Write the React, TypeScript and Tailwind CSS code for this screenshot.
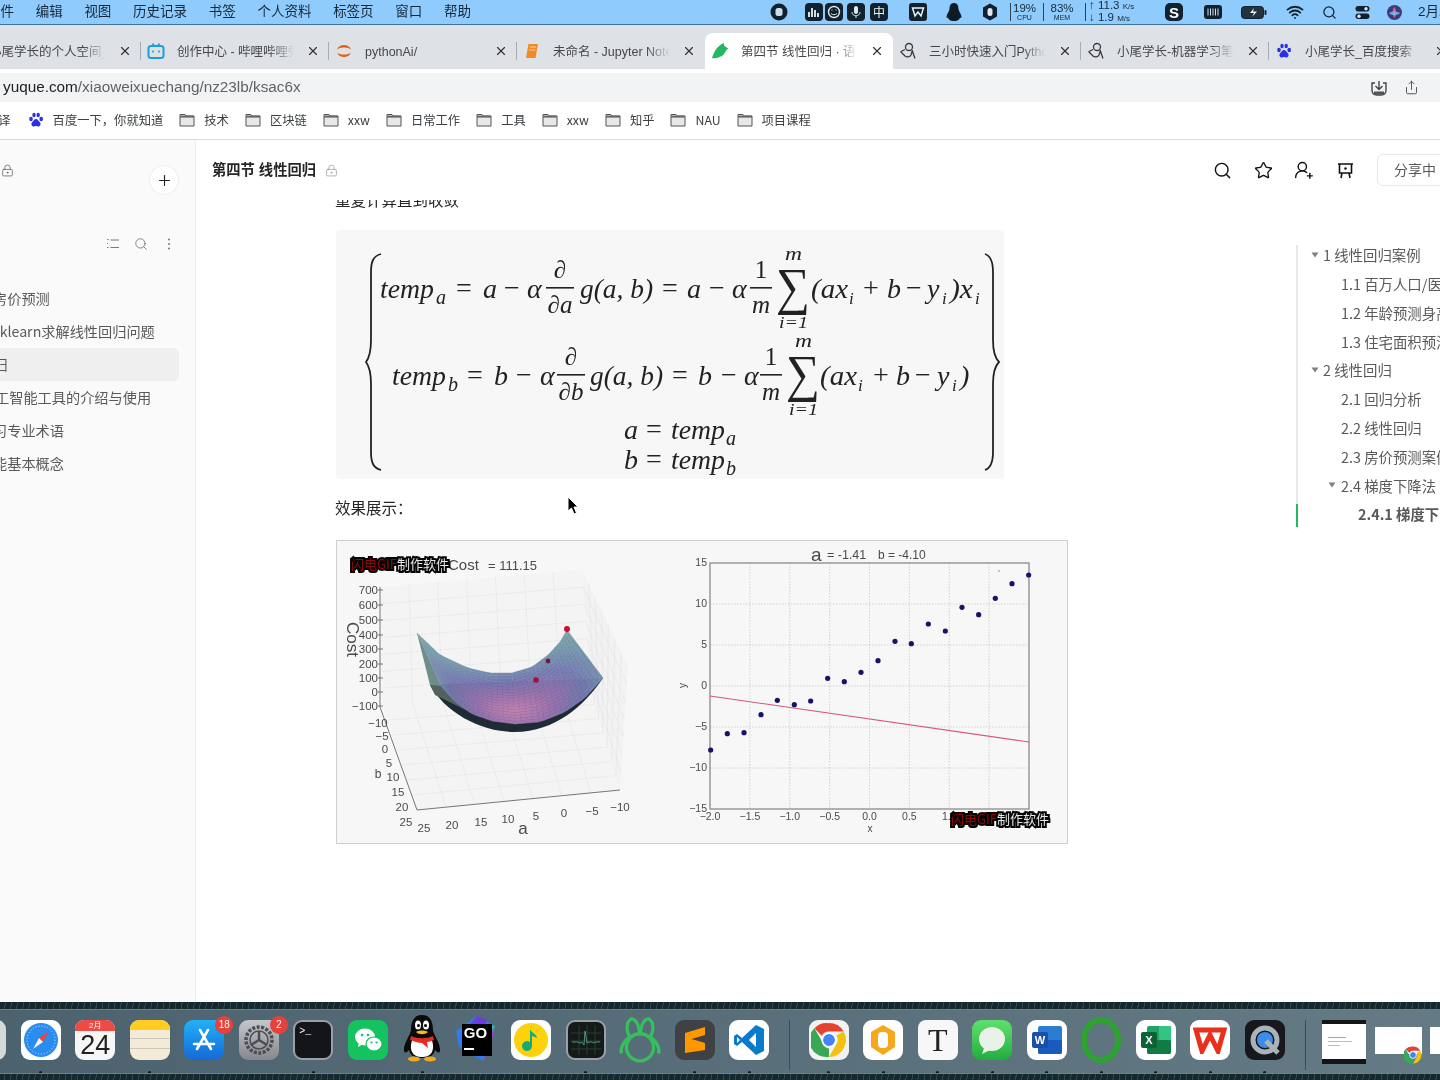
import React, { ReactNode } from "react";
import { Search, Star, UserRoundPlus, Plus, LockKeyhole, X, Share, Wifi } from "lucide-react";

const cjk = "[font-family:'Noto_Sans_CJK_SC',sans-serif]";

// ---------- small browser icons ----------
const FolderIcon = () => (
  <svg width="16" height="14" viewBox="0 0 16 14" className="flex-none">
    <path d="M1 3V1.5h5L7 3h8v10H1z" fill="#e8e8e8" stroke="#555" strokeWidth="1" />
    <rect x="1" y="2.6" width="14" height="2" fill="#666" />
  </svg>
);

const Paw = ({ size = 16 }: { size?: number }) => (
  <svg width={size} height={size} viewBox="0 0 16 16" className="flex-none">
    <g fill="#2932e1">
      <ellipse cx="3" cy="7" rx="1.8" ry="2.3" />
      <ellipse cx="6" cy="3" rx="1.7" ry="2.3" />
      <ellipse cx="10.2" cy="3" rx="1.7" ry="2.3" />
      <ellipse cx="13.2" cy="7" rx="1.8" ry="2.3" />
      <path d="M8 7c-2 0-2.400 2-4 3.500-1.300 1.500-.3 4.300 2 4 1-.1 1.300-.4 2-.4s1 .3 2 .4c2.300.3 3.300-2.500 2-4C10.400 9 10 7 8 7z" />
    </g>
  </svg>
);

const Bili = () => (
  <svg width="18" height="18" viewBox="0 0 18 18">
    <rect x="1.500" y="4" width="15" height="12" rx="2.500" fill="none" stroke="#1c9fd8" strokeWidth="2" />
    <path d="M5.500 1.500 7.500 4M12.500 1.500 10.500 4" stroke="#1c9fd8" strokeWidth="1.600" />
    <path d="M6 8.500v2M12 8.500v2" stroke="#1c9fd8" strokeWidth="1.600" />
  </svg>
);

const Jupyter = () => (
  <svg width="18" height="18" viewBox="0 0 18 18">
    <path d="M2 7.500C4 1.500 14 1.500 16 7.500 13 4.800 5 4.800 2 7.500z" fill="#e2641f" />
    <path d="M2 10.500C4 16.500 14 16.500 16 10.500 13 13.200 5 13.200 2 10.500z" fill="#e2641f" />
  </svg>
);

const Book = () => (
  <svg width="16" height="16" viewBox="0 0 16 16">
    <path d="M4.500 1H14l-2.500 14H2z" fill="#f08a24" />
    <path d="M5.800 4h6M5.300 7h6" stroke="#fbd9b0" strokeWidth="1" />
  </svg>
);

const Yuque = () => (
  <svg width="18" height="18" viewBox="0 0 18 18">
    <path d="M1 16C3 11 5 4 13 1c-.5 2 .3 3 2 4 1.200.7 2 1.200 2.500 1.500-2 1-2.500 2-3.500 4C12.500 14 6 17 1 16z" fill="#25b864" />
  </svg>
);

const Scribe = () => (
  <svg width="18" height="18" viewBox="0 0 18 18" fill="none" stroke="#3a3a3a" strokeWidth="1.300">
    <circle cx="10" cy="5" r="3.500" />
    <path d="M1.500 9.500 6 14c2 1.500 5 1 6-1l1.500-5M13 8l3 8.500M2 9.500l4-2" />
  </svg>
);

type TabProps = { icon?: ReactNode; title: string; active?: boolean; sep?: boolean };

const Tab = ({ icon, title, active, sep }: TabProps) => (
  <div
    className={
      active
        ? "relative flex h-[36px] w-[188px] flex-none items-center rounded-t-lg bg-white"
        : "relative flex h-[36px] w-[188px] flex-none items-center"
    }
  >
    <div className="flex w-[36px] flex-none justify-center pr-[6px]">{icon}</div>
    <div className="w-[117px] flex-none overflow-hidden whitespace-nowrap pt-[2px] text-[12.5px] text-[#45474a] [mask-image:linear-gradient(to_right,black_80%,transparent)]">
      {title}
    </div>
    <X size={14} strokeWidth={2} className="ml-[12px] flex-none text-[#333]" />
    {sep && <div className="absolute right-0 top-[9px] h-[18px] w-px bg-[#a9acb0]" />}
  </div>
);

// ---------- menu bar icons ----------
const Blob = ({ w, children, ml }: { w: string; children: ReactNode; ml?: string }) => (
  <div className={`flex flex-none items-center justify-center ${w} ${ml ?? ""}`}>{children}</div>
);

const MenuBar = () => (
  <div className="flex h-[25px] flex-none items-center overflow-hidden border-b border-[#3f7299] bg-[#8fcbfc] text-[13.5px] text-[#15293a]">
    <div className="-ml-[13px] flex flex-none gap-[21.7px] whitespace-nowrap pt-[1px]">
      {["文件", "编辑", "视图", "历史记录", "书签", "个人资料", "标签页", "窗口", "帮助"].map((m) => (
        <span key={m}>{m}</span>
      ))}
    </div>
    <Blob w="w-[28px]" ml="ml-[294px]">
      <svg width="18" height="18" viewBox="0 0 18 18">
        <circle cx="9" cy="9" r="8.500" fill="#12212e" />
        <rect x="5.500" y="5" width="7" height="8" rx="2.500" fill="#c9dff0" />
      </svg>
    </Blob>
    <Blob w="w-[20px]" ml="ml-[11px]">
      <svg width="18" height="18" viewBox="0 0 18 18">
        <rect width="18" height="18" rx="4" fill="#12212e" />
        <path d="M4 14V9M7 14V5M10 14V7M13 14V10" stroke="#e9f2f9" strokeWidth="1.800" />
      </svg>
    </Blob>
    <Blob w="w-[20px]">
      <svg width="18" height="18" viewBox="0 0 18 18">
        <rect width="18" height="18" rx="4" fill="#12212e" />
        <circle cx="9" cy="9" r="5.500" fill="none" stroke="#dde9f2" strokeWidth="1.400" />
        <path d="M6 10.500c1.500 1.500 4.500 1.500 6 0M6.500 7h1M10.500 7h1" stroke="#dde9f2" />
      </svg>
    </Blob>
    <Blob w="w-[24px]">
      <svg width="18" height="18" viewBox="0 0 18 18">
        <rect width="18" height="18" rx="4" fill="#12212e" />
        <rect x="7" y="3" width="4" height="8" rx="2" fill="#dde9f2" />
        <path d="M5 9c0 5 8 5 8 0M9 13v2" stroke="#dde9f2" fill="none" />
      </svg>
    </Blob>
    <Blob w="w-[22px]">
      <div className={`flex h-[18px] w-[18px] items-center justify-center rounded-[4px] bg-[#12212e] text-[12px] leading-none text-[#e9f2f9] ${cjk}`}>中</div>
    </Blob>
    <Blob w="w-[24px]" ml="ml-[16px]">
      <svg width="18" height="18" viewBox="0 0 18 18">
        <rect width="18" height="18" rx="3" fill="#12212e" />
        <path d="M3.500 5h11L12 13l-3-4-3 4z" fill="none" stroke="#e9f2f9" strokeWidth="1.500" />
      </svg>
    </Blob>
    <Blob w="w-[24px]" ml="ml-[12px]">
      <svg width="16" height="18" viewBox="0 0 16 18">
        <path d="M8 0c3.500 0 4.500 3 4.500 6 0 2 3 5 3 8 0 1.500-1 1-1.500.5-.5 2-2 3.500-6 3.500s-5.500-1.500-6-3.500C1.500 15 .5 15.500.5 14c0-3 3-6 3-8 0-3 1-6 4.500-6z" fill="#0e1a24" />
      </svg>
    </Blob>
    <Blob w="w-[24px]" ml="ml-[12px]">
      <svg width="16" height="18" viewBox="0 0 16 18">
        <path d="M8 0.500 15 4.500v9L8 17.500 1 13.500v-9z" fill="#12212e" />
        <rect x="5.500" y="5" width="5" height="8" rx="2.500" fill="#dde9f2" />
      </svg>
    </Blob>
    <div className="ml-[8px] h-[18px] w-px flex-none bg-[#2a4558]" />
    <div className="flex w-[27px] flex-none flex-col items-center text-[11.5px] leading-[11px]">
      <span>19%</span>
      <span className="text-[7px] leading-[8px]">CPU</span>
    </div>
    <div className="ml-[5px] h-[18px] w-px flex-none bg-[#2a4558]" />
    <div className="ml-[4px] flex w-[28px] flex-none flex-col items-center text-[11.5px] leading-[11px]">
      <span>83%</span>
      <span className="text-[7px] leading-[8px]">MEM</span>
    </div>
    <div className="ml-[9px] h-[18px] w-px flex-none bg-[#2a4558]" />
    <div className="ml-[3px] flex w-[50px] flex-none flex-col text-[11.5px] leading-[10px]">
      <span>↑ 11.3 <span className="text-[8px]">K/s</span></span>
      <span>↓ 1.9 <span className="text-[8px]">M/s</span></span>
    </div>
    <Blob w="w-[22px]" ml="ml-[24px]">
      <div className="flex h-[18px] w-[18px] items-center justify-center rounded-[5px] bg-[#12212e] text-[15px] font-bold leading-none text-white">S</div>
    </Blob>
    <Blob w="w-[24px]" ml="ml-[16px]">
      <svg width="18" height="14" viewBox="0 0 18 14">
        <rect width="18" height="14" rx="3" fill="#12212e" />
        <path d="M4 3.500v7M6.500 3.500v7M9 3.500v7M11.500 3.500v7M14 3.500v7" stroke="#cfe2f0" />
      </svg>
    </Blob>
    <Blob w="w-[28px]" ml="ml-[15px]">
      <svg width="26" height="13" viewBox="0 0 26 13">
        <rect x="0.500" y="0.500" width="22" height="12" rx="3" fill="#223240" stroke="#12212e" />
        <rect x="23.500" y="4" width="2" height="5" rx="1" fill="#12212e" />
        <path d="M13 2 9 7h4l-2 4 5-5.500h-4z" fill="#e9f2f9" />
      </svg>
    </Blob>
    <Blob w="w-[22px]" ml="ml-[16px]">
      <Wifi size={18} strokeWidth={2.4} className="text-[#12212e]" />
    </Blob>
    <Blob w="w-[20px]" ml="ml-[13px]">
      <Search size={15} strokeWidth={2} className="text-[#12212e]" />
    </Blob>
    <Blob w="w-[20px]" ml="ml-[13px]">
      <svg width="15" height="15" viewBox="0 0 15 15">
        <rect x="0.500" y="1" width="14" height="5.500" rx="2.750" fill="#12212e" />
        <rect x="0.500" y="8.500" width="14" height="5.500" rx="2.750" fill="#12212e" />
        <circle cx="11" cy="3.750" r="1.700" fill="#dde9f2" />
        <circle cx="4" cy="11.250" r="1.700" fill="#dde9f2" />
      </svg>
    </Blob>
    <Blob w="w-[20px]" ml="ml-[12px]">
      <svg width="15" height="15" viewBox="0 0 15 15">
        <circle cx="7.500" cy="7.500" r="7.500" fill="#3f3a78" />
        <path d="M7.500 2c2 3 2 8 0 11C5 10 5 5 7.500 2z" fill="#e65aa0" />
        <path d="M2 8c3-2 8-2 11 0-3 3-8 3-11 0z" fill="#71c4f0" opacity=".8" />
      </svg>
    </Blob>
    <span className="ml-[14px] flex-none whitespace-nowrap pt-[1px]">2月24日</span>
  </div>
);

const tabs: TabProps[] = [
  { title: "小尾学长的个人空间_哔哩", sep: true },
  { icon: <Bili />, title: "创作中心 - 哔哩哔哩弹幕", sep: true },
  { icon: <Jupyter />, title: "pythonAi/", sep: true },
  { icon: <Book />, title: "未命名 - Jupyter Notebook" },
  { icon: <Yuque />, title: "第四节 线性回归 · 语雀", active: true },
  { icon: <Scribe />, title: "三小时快速入门Python", sep: true },
  { icon: <Scribe />, title: "小尾学长-机器学习笔记", sep: true },
  { icon: <Paw />, title: "小尾学长_百度搜索" },
];

const BrowserChrome = () => (
  <>
    <div className="flex h-[44px] flex-none items-end overflow-hidden bg-[#dee1e6] pb-0">
      <div className="-ml-[47px] flex flex-none">
        {tabs.map((t) => (
          <Tab key={t.title} {...t} />
        ))}
      </div>
    </div>
    <div className="flex h-[33px] flex-none items-end bg-white">
      <div className="flex h-[29px] w-full items-center bg-[#f1f3f4] pl-[3px] pr-[21px] text-[15.3px]">
        <span className="text-[#202124]">yuque.com</span>
        <span className="text-[#5f6368]">/xiaoweixuechang/nz23lb/ksac6x</span>
        <svg width="18" height="18" viewBox="0 0 18 18" fill="none" stroke="#444" strokeWidth="1.400" className="ml-auto">
          <path d="M9 2v8M5.500 7 9 10.500 12.500 7" />
          <path d="M5 4H2v7c0 3 2 5 5 5h4c3 0 5-2 5-5V4h-3" />
          <rect x="4" y="12.500" width="10" height="3" fill="#555" stroke="none" />
        </svg>
        <Share size={15} strokeWidth={1.4} className="ml-[16px] text-[#444]" />
      </div>
    </div>
    <div className={`flex h-[37px] flex-none items-center gap-[16px] overflow-hidden bg-white pb-px text-[12.3px] text-[#3c4043] ${cjk}`}>
      <span className="-ml-[14px] flex-none">翻译</span>
      <div className="ml-px flex flex-none items-center gap-[9px]">
        <Paw />
        <span className="whitespace-nowrap">百度一下，你就知道</span>
      </div>
      {["技术", "区块链", "xxw", "日常工作", "工具", "xxw", "知乎", "NAU", "项目课程"].map((b, i) => (
        <div key={i} className="flex flex-none items-center gap-[9px]">
          <FolderIcon />
          <span>{b}</span>
        </div>
      ))}
    </div>
    <div className="h-px flex-none bg-[#dcdcdc]" />
  </>
);

// ---------- sidebar ----------
const sideItems = [
  { text: "房价预测", cls: "-ml-[7px]" },
  { text: "sklearn求解线性回归问题", cls: "-ml-[7px]" },
  { text: "线性回归", cls: "-ml-[49px]", active: true },
  { text: "工智能工具的介绍与使用", cls: "-ml-[5px]" },
  { text: "习专业术语", cls: "-ml-[7px]" },
  { text: "能基本概念", cls: "-ml-[7px]" },
];

const Sidebar = () => (
  <div className="w-[196px] flex-none overflow-hidden border-r border-[#f0f0f0] bg-[#fafafa]">
    <div className="flex items-start justify-between pr-[16px] pt-[25px]">
      <LockKeyhole size={13} strokeWidth={1.3} className="-mt-[1px] ml-[1px] text-[#555]" />
      <div className="flex h-[30px] w-[30px] items-center justify-center rounded-full border border-[#ececec] bg-white">
        <Plus size={17} strokeWidth={1.6} className="text-[#222]" />
      </div>
    </div>
    <div className="mt-[42px] flex justify-end gap-[14px] pr-[19px] text-[#777]">
      <svg width="14" height="14" viewBox="0 0 14 14" fill="none" stroke="currentColor" strokeWidth="1.200">
        <path d="M4.500 3H13M4.500 10.500H13M1 2.500h1.500M1 10.500h1.500M1 6.500h1" />
      </svg>
      <Search size={14} strokeWidth={1.5} />
      <svg width="14" height="14" viewBox="0 0 14 14" fill="currentColor">
        <circle cx="7" cy="2.500" r="1" />
        <circle cx="7" cy="7" r="1" />
        <circle cx="7" cy="11.500" r="1" />
      </svg>
    </div>
    <div className={`mt-[31px] text-[14.200px] text-[#585a5a] ${cjk}`}>
      {sideItems.map((s) => (
        <div
          key={s.text}
          className={
            s.active
              ? "flex h-[33px] w-[179px] items-center rounded-r-md bg-[#efefef] whitespace-nowrap"
              : "flex h-[33px] w-[179px] items-center whitespace-nowrap"
          }
        >
          <span className={`flex-none ${s.cls}`}>{s.text}</span>
        </div>
      ))}
    </div>
  </div>
);

// ---------- formula picture ----------
const M = ({ x, y, w, s = 28, up, children }: { x: number; y: number; w?: number; s?: number; up?: boolean; children: ReactNode }) => (
  <text x={x} y={y} fontSize={s} fontStyle={up ? "normal" : "italic"} textLength={w} lengthAdjust={w ? "spacingAndGlyphs" : undefined}>
    {children}
  </text>
);

const Sum = ({ cx, y, top }: { cx: number; y: number; top: number }) => (
  <>
    <M x={cx - 8} y={top} s={18} w={17}>m</M>
    <text x={cx - 17} y={y} fontSize="52" textLength={34} lengthAdjust="spacingAndGlyphs">∑</text>
    <M x={cx - 14} y={top + 68} s={16} w={29}>i=1</M>
  </>
);

const Frac = ({ cx, y, a, b, w }: { cx: number; y: number; a: string; b: string; w: number }) => (
  <>
    <text x={cx} y={y - 19} fontSize="25" textAnchor="middle">{a}</text>
    <rect x={cx - w / 2} y={y - 10} width={w} height="1.600" fill="#222" />
    <text x={cx} y={y + 16} fontSize="25" fontStyle="italic" textAnchor="middle">{b}</text>
  </>
);

const FormulaImage = () => (
  <svg
    viewBox="336 230 668 249"
    width="668"
    height="249"
    className="block rounded-sm bg-[#f7f7f7] blur-[0.4px] [font-family:'Liberation_Serif',serif]"
    fill="#222"
  >
    <M x={380} y={298} w={54}>temp</M>
    <M x={436} y={304} s={20}>a</M>
    <M x={456} y={297} up>=</M>
    <M x={483} y={298}>a</M>
    <M x={504} y={297} up>−</M>
    <M x={527} y={298}>α</M>
    <Frac cx={560} y={297} a="∂" b="∂a" w={28} />
    <M x={580} y={298} w={73}>g(a, b)</M>
    <M x={662} y={297} up>=</M>
    <M x={687} y={298}>a</M>
    <M x={709} y={297} up>−</M>
    <M x={732} y={298}>α</M>
    <Frac cx={761} y={297} a="1" b="m" w={22} />
    <Sum cx={793} y={304} top={260} />
    <M x={811} y={298} w={37}>(ax</M>
    <M x={849} y={304} s={17}>i</M>
    <M x={863} y={297} up>+</M>
    <M x={887} y={298}>b</M>
    <M x={906} y={297} up>−</M>
    <M x={927} y={298}>y</M>
    <M x={942} y={304} s={17}>i</M>
    <M x={950} y={298} w={23}>)x</M>
    <M x={975} y={304} s={17}>i</M>

    <M x={392} y={385} w={54}>temp</M>
    <M x={448} y={391} s={20}>b</M>
    <M x={467} y={384} up>=</M>
    <M x={494} y={385}>b</M>
    <M x={516} y={384} up>−</M>
    <M x={540} y={385}>α</M>
    <Frac cx={571} y={384} a="∂" b="∂b" w={28} />
    <M x={590} y={385} w={73}>g(a, b)</M>
    <M x={672} y={384} up>=</M>
    <M x={698} y={385}>b</M>
    <M x={721} y={384} up>−</M>
    <M x={744} y={385}>α</M>
    <Frac cx={771} y={384} a="1" b="m" w={22} />
    <Sum cx={803} y={391} top={347} />
    <M x={820} y={385} w={37}>(ax</M>
    <M x={858} y={391} s={17}>i</M>
    <M x={873} y={384} up>+</M>
    <M x={896} y={385}>b</M>
    <M x={915} y={384} up>−</M>
    <M x={937} y={385}>y</M>
    <M x={952} y={391} s={17}>i</M>
    <M x={960} y={385}>)</M>

    <M x={624} y={439}>a</M>
    <M x={646} y={438} up>=</M>
    <M x={671} y={439} w={54}>temp</M>
    <M x={726} y={445} s={20}>a</M>
    <M x={624} y={469}>b</M>
    <M x={646} y={468} up>=</M>
    <M x={671} y={469} w={54}>temp</M>
    <M x={726} y={475} s={20}>b</M>

    <path
      d="M381 254C373 256 371 262 371 272V340C371 352 369 358 366 362C369 366 371 372 371 384V452C371 462 373 468 381 470"
      fill="none"
      stroke="#222"
      strokeWidth="1.800"
    />
    <path
      d="M985 254C991 256 993 262 993 272V340C993 352 995 358 999 362C995 366 993 372 993 384V452C993 462 991 468 985 470"
      fill="none"
      stroke="#222"
      strokeWidth="1.800"
    />
  </svg>
);

// ---------- GIF charts ----------
type P = [number, number];
const sample = (pts: P[], t: number): P => {
  const f = t * (pts.length - 1);
  const i = Math.min(Math.floor(f), pts.length - 2);
  const k = f - i;
  return [pts[i][0] + (pts[i + 1][0] - pts[i][0]) * k, pts[i][1] + (pts[i + 1][1] - pts[i][1]) * k];
};

const topEdge: P[] = [[417, 633], [440, 655], [468, 668], [490, 673], [512, 673], [532, 667], [548, 655], [560, 642], [567, 630]];
const botEdge: P[] = [[441, 686], [455, 702], [472, 714], [492, 721], [515, 724], [540, 722], [565, 712], [585, 698], [603, 678]];

const stops: [number, number[]][] = [
  [0, [195, 130, 175]],
  [0.4, [150, 115, 175]],
  [0.7, [115, 120, 175]],
  [1.0, [115, 150, 170]],
  [1.3, [125, 165, 160]],
  [3, [125, 165, 160]],
];
const colorAt = (u: number, v: number) => {
  const d = Math.hypot((u - 0.5) / 0.55, (v - 0.75) / 0.85);
  for (let i = 0; i < stops.length - 1; i++) {
    if (d <= stops[i + 1][0]) {
      const k = (d - stops[i][0]) / (stops[i + 1][0] - stops[i][0]);
      const c = stops[i][1].map((a, j) => Math.round(a + (stops[i + 1][1][j] - a) * k));
      return `rgb(${c.join(",")})`;
    }
  }
  return "rgb(125,165,160)";
};

const Surface = () => {
  const quads: ReactNode[] = [];
  const nu = 34;
  const nv = 18;
  const pt = (u: number, v: number): P => {
    const a = sample(topEdge, u);
    const b = sample(botEdge, u);
    return [a[0] + (b[0] - a[0]) * v, a[1] + (b[1] - a[1]) * v];
  };
  for (let i = 0; i < nu; i++) {
    for (let j = 0; j < nv; j++) {
      const ps = [pt(i / nu, j / nv), pt((i + 1) / nu, j / nv), pt((i + 1) / nu, (j + 1) / nv), pt(i / nu, (j + 1) / nv)];
      const c = colorAt((i + 0.5) / nu, (j + 0.5) / nv);
      quads.push(<polygon key={`${i}-${j}`} points={ps.map((p) => p.join(",")).join(" ")} fill={c} stroke={c} strokeWidth="0.4" />);
    }
  }
  return <g>{quads}</g>;
};

const gridLines = (a: P, b: P, c: P, d: P, n: number, m: number) => {
  const lines: ReactNode[] = [];
  const mix = (p: P, q: P, t: number): P => [p[0] + (q[0] - p[0]) * t, p[1] + (q[1] - p[1]) * t];
  for (let i = 1; i < n; i++) {
    const s = mix(a, b, i / n);
    const e = mix(d, c, i / n);
    lines.push(<line key={`n${i}`} x1={s[0]} y1={s[1]} x2={e[0]} y2={e[1]} />);
  }
  for (let i = 1; i < m; i++) {
    const s = mix(a, d, i / m);
    const e = mix(b, c, i / m);
    lines.push(<line key={`m${i}`} x1={s[0]} y1={s[1]} x2={e[0]} y2={e[1]} />);
  }
  return <g stroke="#dedede" strokeWidth="0.7" strokeDasharray="1.500 1">{lines}</g>;
};

const Watermark = ({ x, y }: { x: number; y: number }) => (
  <text x={x} y={y} fontSize="13" style={{ paintOrder: "stroke" }} stroke="#050505" strokeWidth="4" className="[font-family:'Noto_Sans_CJK_SC',sans-serif]">
    <tspan fill="#8a0a0a">闪电GIF</tspan>
    <tspan fill="#e8e8e8">制作软件</tspan>
  </text>
);

const zTicks: [string, number][] = [["700", 590], ["600", 605], ["500", 620], ["400", 635], ["300", 649], ["200", 664], ["100", 678], ["0", 692], ["−100", 706]];
const bTicks: [string, number, number][] = [["−10", 378, 723], ["−5", 382, 736], ["0", 385, 749], ["5", 389, 763], ["10", 393, 777], ["15", 398, 792], ["20", 402, 807], ["25", 406, 822]];
const aTicks: [string, number, number][] = [["25", 424, 828], ["20", 452, 825], ["15", 481, 822], ["10", 508, 819], ["5", 536, 816], ["0", 564, 813], ["−5", 592, 811], ["−10", 620, 807]];

const zoomDots: P[] = [[122, 645], [172, 596], [222, 593], [273, 539], [322, 496], [373, 509], [422, 498], [473, 430], [523, 440], [573, 412], [624, 377], [675, 319], [724, 326], [775, 267], [826, 288], [876, 217], [926, 239], [976, 190], [1026, 146], [1076, 120]];
const xt = [-2, -1.5, -1, -0.5, 0, 0.5, 1, 1.5, 2];
const yt = [15, 10, 5, 0, -5, -10, -15];
const sx = (v: number) => 710 + ((v + 2) / 4) * 319;
const sy = (v: number) => 563 + ((15 - v) / 30) * 246;
const fmt = (v: number) => (v < 0 ? "−" : "") + Math.abs(v).toFixed(1);

const ChartImage = () => (
  <div className="h-[304px] w-[732px] border border-[#cfcfcf]">
    <svg
      viewBox="337 541 730 302"
      width="730"
      height="302"
      className="block bg-[#f7f7f7] blur-[0.4px] [font-family:'Liberation_Sans',sans-serif]"
    >
      {/* 3d box */}
      <polygon points="380,587 582,570 590,690 383,705" fill="#f4f4f4" />
      <polygon points="582,570 628,667 620,790 590,690" fill="#f2f2f2" />
      <polygon points="383,705 417,810 620,790 590,690" fill="#f4f4f4" />
      {gridLines([380, 587], [582, 570], [590, 690], [383, 705], 7, 7)}
      {gridLines([582, 570], [628, 667], [620, 790], [590, 690], 7, 7)}
      {gridLines([383, 705], [417, 810], [620, 790], [590, 690], 7, 7)}
      <path d="M380 587V707L417 810L620 790" fill="none" stroke="#666" strokeWidth="0.9" />
      {zTicks.map(([, y]) => <line key={y} x1={378} x2={383} y1={y} y2={y} stroke="#555" strokeWidth="0.8" />)}
      <g fill="#4a4a4a" fontSize="11.500">
        {zTicks.map(([t, y]) => <text key={t} x={378} y={y + 4} textAnchor="end">{t}</text>)}
        {bTicks.map(([t, x, y]) => <text key={t} x={x} y={y + 4} textAnchor="middle">{t}</text>)}
        {aTicks.map(([t, x, y]) => <text key={t} x={x} y={y + 4} textAnchor="middle">{t}</text>)}
        <text x={378} y={778} textAnchor="middle" fontSize="12">b</text>
        <text x={523} y={834} textAnchor="middle" fontSize="17">a</text>
        <text x={0} y={0} fontSize="17" transform="translate(347 622) rotate(90)">Cost</text>
        <text x={448} y={570} fontSize="15">Cost</text>
        <text x={488} y={570} fontSize="13">= 111.15</text>
      </g>
      {/* bowl */}
      <path d="M430 685C445 712 480 732 515 732C555 732 585 705 603 678L560 680L441 684Z" fill="#1e2b35" />
      <path d="M430 685L441 684L470 712L435 695Z" fill="#55615f" />
      <path d="M417 633L430 685L441 686Z" fill="#6f8d88" />
      <Surface />
      <circle cx={567} cy={629} r={3} fill="#c8102e" />
      <circle cx={548} cy={661} r={2.400} fill="#6a1c40" />
      <circle cx={536} cy={680} r={2.800} fill="#a61034" />
      <Watermark x={351} y={569} />

      {/* 2d plot */}
      <g stroke="#c9c9c9" strokeWidth="0.8" strokeDasharray="1.500 1.500">
        {xt.slice(1, -1).map((v) => <line key={v} x1={sx(v)} x2={sx(v)} y1={563} y2={809} />)}
        {yt.slice(1, -1).map((v) => <line key={v} x1={710} x2={1029} y1={sy(v)} y2={sy(v)} />)}
      </g>
      <rect x={710} y={563} width={319} height={246} fill="none" stroke="#8a8a8a" strokeWidth="1.300" />
      <g fill="#4a4a4a" fontSize="10.500">
        {xt.map((v) => <text key={v} x={sx(v)} y={820} textAnchor="middle">{fmt(v)}</text>)}
        {yt.map((v) => <text key={v} x={707} y={sy(v) + 3} textAnchor="end">{v < 0 ? `−${-v}` : v}</text>)}
        <text x={870} y={832} textAnchor="middle" fontSize="10">x</text>
        <text x={0} y={0} fontSize="10" transform="translate(686 688) rotate(-90)">y</text>
        <text x={811} y={561} fontSize="19">a</text>
        <text x={827} y={559} fontSize="12.500">= -1.41</text>
        <text x={878} y={559} fontSize="12">b = -4.10</text>
      </g>
      <line x1={710} y1={696} x2={1029} y2={742} stroke="#d6587a" strokeWidth="1.100" />
      {zoomDots.map(([x, y]) => (
        <circle key={x} cx={670 + x / 3} cy={535 + y / 3} r={2.600} fill="#17136b" />
      ))}
      <circle cx={999} cy={571} r={0.700} fill="#d33" />
      <Watermark x={951} y={824} />
    </svg>
  </div>
);

// ---------- outline on the right ----------
const Caret = () => (
  <svg width="8" height="6" viewBox="0 0 8 6" className="flex-none"><path d="M0.500 0.500h7L4 5.500z" fill="#7d8080" /></svg>
);

const outline = [
  { t: "1 线性回归案例", c: "pl-[13px] gap-[4px]", caret: true },
  { t: "1.1 百万人口/医疗开销", c: "pl-[43px]" },
  { t: "1.2 年龄预测身高案例", c: "pl-[43px]" },
  { t: "1.3 住宅面积预测房价", c: "pl-[43px]" },
  { t: "2 线性回归", c: "pl-[13px] gap-[4px]", caret: true },
  { t: "2.1 回归分析", c: "pl-[43px]" },
  { t: "2.2 线性回归", c: "pl-[43px]" },
  { t: "2.3 房价预测案例", c: "pl-[43px]" },
  { t: "2.4 梯度下降法", c: "pl-[30px] gap-[5px]", caret: true },
  { t: "2.4.1 梯度下降", c: "pl-[60px] font-bold" },
];

const Outline = () => (
  <div className="mt-[45px] flex h-[282px] min-w-0 flex-1 overflow-visible">
    <div className="flex w-[2px] flex-none flex-col">
      <div className="h-[259px] bg-[#e7e9e8]" />
      <div className="h-[23px] bg-[#25b864]" />
    </div>
    <div className={`-mt-[4.400px] min-w-0 flex-1 overflow-hidden text-[14.400px] text-[#585a5a] ${cjk}`}>
      {outline.map((o) => (
        <div key={o.t} className={`flex h-[28.800px] items-center whitespace-nowrap ${o.c}`}>
          {o.caret && <Caret />}
          <span className="flex-none">{o.t}</span>
        </div>
      ))}
    </div>
  </div>
);

const Main = () => (
  <div className="flex min-h-0 flex-1 overflow-hidden bg-white">
    <Sidebar />
    <div className="flex min-w-0 flex-1 flex-col overflow-hidden">
      <div className="flex h-[60px] flex-none items-center pl-[16px]">
        <span className="pt-[1px] text-[14.300px] font-bold text-[#262626]">第四节 线性回归</span>
        <LockKeyhole size={13} strokeWidth={1.2} className="ml-[9px] text-[#8a8f8d]" />
        <div className="-mr-[17px] ml-auto flex items-center gap-[21.500px] text-[#111]">
          <Search size={19} strokeWidth={1.8} />
          <Star size={19} strokeWidth={1.7} />
          <UserRoundPlus size={20} strokeWidth={1.7} />
          <svg width="19" height="19" viewBox="0 0 19 19" fill="none" stroke="currentColor" strokeWidth="1.600">
            <path d="M2 3h15M3.500 3v9h12V3M6 12l-1 5M13 12l1 5" />
            <circle cx="9.500" cy="7.500" r="1.200" fill="currentColor" stroke="none" />
          </svg>
          <div className="ml-px flex h-[32px] w-[80px] items-center rounded-md border border-[#e7e9e8] pl-[16px] text-[14px] text-[#585a5a]">分享中</div>
        </div>
      </div>
      <div className="flex min-h-0 flex-1 overflow-hidden">
        <div className="relative w-[1100px] flex-none pl-[139px]">
          <div className="-mt-[11px] h-[24px] text-[15.500px] leading-[24px] text-[#262626]">重复计算直到收敛</div>
          <div className="ml-px mt-[17px]"><FormulaImage /></div>
          <div className="mt-[18px] h-[24px] text-[15.500px] leading-[24px] text-[#262626]">效果展示：</div>
          <div className="ml-px mt-[19px]"><ChartImage /></div>
          <svg width="14" height="20" viewBox="0 0 14 20" className="absolute left-[371px] top-[296px]">
            <path d="M1 1v14l3.500-3 2.500 6 2.500-1-2.500-6H11z" fill="#000" stroke="#fff" strokeWidth="1" />
          </svg>
        </div>
        <Outline />
      </div>
    </div>
  </div>
);

// ---------- dock ----------
const Tile = ({ bg = "bg-white", children }: { bg?: string; children: ReactNode }) => (
  <div className={`flex h-[40px] w-[40px] items-center justify-center overflow-hidden rounded-[9px] ${bg}`}>{children}</div>
);

const ChromeLogo = ({ size = 30 }: { size?: number }) => (
  <svg width={size} height={size} viewBox="0 0 32 32">
    <path d="M16 1a15 15 0 0 1 13 7.500H16a7.500 7.500 0 0 0-6.500 3.750L3 5.500A15 15 0 0 1 16 1z" fill="#e2442f" />
    <path d="M29 8.500A15 15 0 0 1 16 31l6.500-11.250A7.500 7.500 0 0 0 22.500 12z" fill="#f4c20d" />
    <path d="M16 31A15 15 0 0 1 3 5.500l6.500 11.250A7.500 7.500 0 0 0 16 23.500z" fill="#3aa757" />
    <circle cx="16" cy="16" r="6" fill="#4285f4" stroke="#fff" strokeWidth="1.500" />
  </svg>
);

type DockItem = { key: string; dot?: boolean; badge?: string; node: ReactNode };

const dockLeft: DockItem[] = [
  { key: "finder", node: <Tile bg="bg-[#d5d9d8]"><div /></Tile> },
  {
    key: "safari",
    dot: true,
    node: (
      <Tile>
        <svg width="36" height="36" viewBox="0 0 36 36">
          <circle cx="18" cy="18" r="17" fill="#2a8cee" />
          <circle cx="18" cy="18" r="14" fill="none" stroke="#cfe6fb" strokeWidth="1" strokeDasharray="1 2" />
          <path d="M26 9 20 20 16 16z" fill="#f0453a" />
          <path d="M10 27 16 16 20 20z" fill="#eef4fa" />
        </svg>
      </Tile>
    ),
  },
  {
    key: "calendar",
    node: (
      <div className="flex h-[40px] w-[40px] flex-col overflow-hidden rounded-[9px] bg-[#f6f6f6]">
        <div className="h-[11px] bg-[#ef4a43] text-center text-[8px] leading-[11px] text-white">2月</div>
        <div className="text-center text-[27px] leading-[29px] text-[#222]">24</div>
      </div>
    ),
  },
  {
    key: "notes",
    dot: true,
    node: (
      <div className="flex h-[40px] w-[40px] flex-col overflow-hidden rounded-[9px] bg-[#f3ead8]">
        <div className="h-[10px] bg-[#ffcc1f]" />
        <div className="mt-[8px] h-px bg-[#cfc8b8]" />
        <div className="mt-[9px] h-px bg-[#cfc8b8]" />
      </div>
    ),
  },
  {
    key: "appstore",
    badge: "18",
    node: (
      <Tile bg="bg-gradient-to-b from-[#25b0f5] to-[#1769d8]">
        <svg width="30" height="30" viewBox="0 0 30 30" fill="none" stroke="#fff" strokeWidth="2.600" strokeLinecap="round">
          <path d="M19 5 8 24M11 5l11 19M5 19h20" />
        </svg>
      </Tile>
    ),
  },
  {
    key: "settings",
    badge: "2",
    node: (
      <Tile bg="bg-gradient-to-b from-[#c4c8cb] to-[#85898d]">
        <svg width="34" height="34" viewBox="0 0 34 34" fill="none" stroke="#4c4d50">
          <circle cx="17" cy="17" r="13" strokeWidth="3.500" strokeDasharray="3 1.500" />
          <circle cx="17" cy="17" r="9" strokeWidth="1.500" />
          <path d="M17 17V8M17 17l8 5M17 17l-8 5" strokeWidth="2.500" />
        </svg>
      </Tile>
    ),
  },
  {
    key: "terminal",
    dot: true,
    node: (
      <div className="flex h-[40px] w-[40px] items-start rounded-[9px] border-2 border-[#9aa1a6] bg-[#141518] p-[4px] font-mono text-[10px] leading-[12px] text-white">
        &gt;_
      </div>
    ),
  },
  {
    key: "wechat",
    node: (
      <Tile bg="bg-[#14c35f]">
        <svg width="32" height="32" viewBox="0 0 32 32" fill="#fff">
          <ellipse cx="13" cy="13" rx="10" ry="8.500" />
          <path d="M7 18l-1 5 5-3z" />
          <ellipse cx="22" cy="20" rx="8" ry="7" stroke="#14c35f" strokeWidth="1.200" />
          <circle cx="10" cy="11" r="1.300" fill="#14c35f" />
          <circle cx="16" cy="11" r="1.300" fill="#14c35f" />
          <circle cx="19.500" cy="18.500" r="1.100" fill="#14c35f" />
          <circle cx="24.500" cy="18.500" r="1.100" fill="#14c35f" />
        </svg>
      </Tile>
    ),
  },
  {
    key: "qq",
    dot: true,
    node: (
      <svg width="40" height="48" viewBox="0 0 40 48" className="-mt-[6px]">
        <path d="M20 1c9 0 11 8 11 15 0 4 8 14 7 21-1 3-3 1-5-1-1 5-5 8-13 8s-12-3-13-8c-2 2-4 4-5 1-1-7 7-17 7-21 0-7 2-15 11-15z" fill="#0b0b0b" />
        <path d="M11 24c4 3 14 3 18 0 2 5 3 9 1 14-2 4-6 5-10 5s-8-1-10-5c-2-5-1-9 1-14z" fill="#fff" />
        <path d="M9 22c6 3 16 3 22 0l1 4c-3 1-5 2-7 2l1 6-6-5c-4 0-8-2-12-3z" fill="#e62c22" />
        <ellipse cx="16" cy="11" rx="3" ry="4.500" fill="#fff" />
        <ellipse cx="24" cy="11" rx="3" ry="4.500" fill="#fff" />
        <circle cx="16.500" cy="11.500" r="1.500" fill="#000" />
        <circle cx="23.500" cy="11.500" r="1.500" fill="#000" />
        <path d="M14 18c3-2 9-2 12 0-3 3-9 3-12 0z" fill="#f8b81e" />
        <ellipse cx="12" cy="45" rx="6" ry="2.500" fill="#f3a81c" />
        <ellipse cx="28" cy="45" rx="6" ry="2.500" fill="#f3a81c" />
      </svg>
    ),
  },
  {
    key: "goland",
    node: (
      <div className="relative h-[40px] w-[40px]">
        <svg width="48" height="48" viewBox="0 0 48 48" className="absolute -left-[4px] -top-[5px]">
          <path d="M24 1l18 10L30 46 6 32 3 16z" fill="#2d7cf0" />
          <path d="M24 1l10 4-6 20L8 20z" fill="#6b3de0" />
          <path d="M34 16l8-5-4 16-8 19z" fill="#9a4ff0" />
          <path d="M34 10l8 1-7 10z" fill="#25d07a" />
        </svg>
        <div className="absolute left-[5px] top-[4px] h-[32px] w-[30px] bg-black pl-[2px] text-[15px] font-bold leading-[18px] text-white">
          GO
          <div className="mt-[6px] h-[2px] w-[10px] bg-white" />
        </div>
      </div>
    ),
  },
  {
    key: "qqmusic",
    node: (
      <Tile>
        <svg width="36" height="36" viewBox="0 0 36 36">
          <circle cx="18" cy="18" r="17" fill="#fbd20b" />
          <path d="M17 7c1 4 6 4 7 9-2-1-4-2-5-2v10a5 5 0 1 1-2-4z" fill="#19a974" />
        </svg>
      </Tile>
    ),
  },
  {
    key: "activity",
    dot: true,
    node: (
      <div className="flex h-[40px] w-[40px] items-center justify-center rounded-[9px] border-2 border-[#9aa1a6] bg-[#141a18]">
        <svg width="30" height="30" viewBox="0 0 30 30" fill="none">
          <path d="M0 8h30M0 16h30M0 24h30M8 0v30M16 0v30M24 0v30" stroke="#2d3a34" />
          <path d="M1 17h6l2 1 2-1 2 3 1-14 2 12 2-1h3l2 1 2-1h4" stroke="#5fae8f" strokeWidth="0.800" />
        </svg>
      </div>
    ),
  },
  {
    key: "navicat",
    node: (
      <svg width="48" height="48" viewBox="0 0 46 46" fill="none" stroke="#35bf5d" strokeWidth="3.200" className="-ml-[4px] -mt-[4px]">
        <circle cx="23" cy="30" r="13" />
        <path d="M13 20C8 10 12 2 16 3c4 1 6 7 7 14M33 20C38 10 34 2 30 3c-4 1-6 7-7 14M13 20C8 24 4 30 5 36M33 20c5 4 9 10 8 16" />
      </svg>
    ),
  },
  {
    key: "sublime",
    dot: true,
    node: (
      <Tile bg="bg-[#3f4144]">
        <svg width="26" height="30" viewBox="0 0 26 30" fill="#ff9800">
          <path d="M23 2v8L3 16V8zM3 12l20 6v7L3 28v-8z" />
        </svg>
      </Tile>
    ),
  },
  {
    key: "vscode",
    dot: true,
    node: (
      <Tile>
        <svg width="34" height="34" viewBox="0 0 34 34">
          <path d="M24 2l8 4v22l-8 4L10 19l-5 4-3-2v-8l3-2 5 4z" fill="#0a7acc" />
          <path d="M24 10l-7 7 7 7z" fill="#fff" />
          <path d="M5 14v6l3-3z" fill="#fff" />
        </svg>
      </Tile>
    ),
  },
];

const dockRight: DockItem[] = [
  { key: "chrome", dot: true, node: <Tile bg="bg-[#f2f2f2]"><ChromeLogo size={36} /></Tile> },
  {
    key: "hex",
    dot: true,
    node: (
      <Tile>
        <svg width="30" height="34" viewBox="0 0 30 34" fill="none">
          <path d="M15 2 27 9v15L15 32 3 24V9z" fill="#f6a81c" />
          <rect x="10" y="9" width="10" height="16" rx="4" fill="#fff" />
        </svg>
      </Tile>
    ),
  },
  {
    key: "typora",
    dot: true,
    node: (
      <div className="flex h-[40px] w-[40px] items-center justify-center rounded-[8px] bg-[#f7f7f7] text-[32px] leading-none text-[#222] [font-family:'Liberation_Serif',serif]">T</div>
    ),
  },
  {
    key: "messages",
    dot: true,
    node: (
      <Tile bg="bg-gradient-to-b from-[#5ee06c] to-[#1fae3f]">
        <svg width="32" height="32" viewBox="0 0 32 32">
          <ellipse cx="16" cy="15" rx="13" ry="12" fill="#e8f2e6" />
          <path d="M8 24 6 30l8-4z" fill="#e8f2e6" />
        </svg>
      </Tile>
    ),
  },
  {
    key: "word",
    dot: true,
    node: (
      <Tile>
        <svg width="34" height="32" viewBox="0 0 34 32">
          <rect x="8" y="2" width="24" height="28" rx="2" fill="#2b7cd3" />
          <rect x="8" y="16" width="24" height="14" rx="2" fill="#185abd" />
          <rect x="2" y="8" width="16" height="16" rx="2" fill="#1a4fa8" />
          <text x="10" y="20" fontSize="11" fontWeight="700" textAnchor="middle" fill="#fff">W</text>
        </svg>
      </Tile>
    ),
  },
  {
    key: "ring",
    dot: true,
    node: (
      <svg width="42" height="46" viewBox="0 0 42 46" className="-ml-px -mt-[3px]">
        <ellipse cx="21" cy="23" rx="17" ry="20" fill="none" stroke="#2ea233" strokeWidth="6" />
      </svg>
    ),
  },
  {
    key: "excel",
    dot: true,
    node: (
      <Tile>
        <svg width="34" height="32" viewBox="0 0 34 32">
          <rect x="8" y="2" width="24" height="28" rx="2" fill="#21a366" />
          <rect x="20" y="2" width="12" height="14" fill="#33c481" />
          <rect x="8" y="16" width="24" height="14" rx="2" fill="#107c41" />
          <rect x="2" y="8" width="16" height="16" rx="2" fill="#0c6234" />
          <text x="10" y="20" fontSize="11" fontWeight="700" textAnchor="middle" fill="#fff">X</text>
        </svg>
      </Tile>
    ),
  },
  {
    key: "wps",
    dot: true,
    node: (
      <Tile>
        <svg width="34" height="28" viewBox="0 0 34 28" fill="none" stroke="#e8301c" strokeWidth="5">
          <path d="M3 4h28L25 25l-8-16-8 16z" />
        </svg>
      </Tile>
    ),
  },
  {
    key: "quicktime",
    dot: true,
    node: (
      <Tile bg="bg-[#16181b]">
        <svg width="34" height="34" viewBox="0 0 34 34" fill="none">
          <circle cx="17" cy="17" r="12" stroke="#a9b3ba" strokeWidth="5" />
          <circle cx="17" cy="17" r="8" fill="#3a8ee8" />
          <path d="M18 18l12 12" stroke="#a9b3ba" strokeWidth="5" />
        </svg>
      </Tile>
    ),
  },
];

const DockCell = ({ item }: { item: DockItem }) => (
  <div className="flex w-[54.500px] flex-none flex-col items-center">
    <div className="relative h-[40px] w-[40px]">
      {item.node}
      {item.badge && (
        <div className="absolute -right-[9px] -top-[4px] flex h-[18px] min-w-[18px] items-center justify-center rounded-full bg-[#e8403a] px-[2px] text-[10px] leading-none text-white">
          {item.badge}
        </div>
      )}
    </div>
    <div className={item.dot ? "mt-[11px] h-[3px] w-[3px] rounded-full bg-[#0c1418]" : "mt-[11px] h-[3px] w-[3px]"} />
  </div>
);

const Dock = () => (
  <div className="h-[78px] flex-none overflow-hidden bg-[#16282c] bg-[repeating-linear-gradient(100deg,transparent_0,transparent_5px,#2a4a4e_5px,#2a4a4e_6px)] pt-[7px]">
    <div className="flex h-[65px] items-start overflow-hidden border-y border-[#6b818c] bg-gradient-to-r from-[#4c626e] to-[#647b86] pt-[10px]">
      <div className="-ml-[41px] flex flex-none">
        {dockLeft.map((d) => <DockCell key={d.key} item={d} />)}
      </div>
      <div className="flex w-[25px] flex-none justify-center">
        <div className="h-[50px] w-px bg-[#3a4c56]" />
      </div>
      <div className="flex flex-none">
        {dockRight.map((d) => <DockCell key={d.key} item={d} />)}
      </div>
      <div className="flex w-[26px] flex-none justify-center">
        <div className="h-[50px] w-px bg-[#3a4c56]" />
      </div>
      <div className="ml-[4px] flex h-[44px] w-[44px] flex-none flex-col justify-between bg-white">
        <div className="h-[4px] bg-[#151515]" />
        <div className="flex flex-col gap-[3px] pl-[6px]">
          <div className="h-px w-[18px] bg-[#aaa]" />
          <div className="h-px w-[24px] bg-[#bbb]" />
          <div className="h-px w-[12px] bg-[#bbb]" />
        </div>
        <div className="h-[5px] bg-[#151515]" />
      </div>
      <div className="relative ml-[9px] mt-[7px] h-[27px] w-[47px] flex-none bg-white">
        <div className="absolute -bottom-[10px] right-0"><ChromeLogo size={18} /></div>
      </div>
      <div className="ml-[8px] mt-[7px] h-[27px] w-[40px] flex-none bg-white" />
    </div>
  </div>
);

export default function App() {
  return (
    <div className="flex h-[1080px] w-[1440px] flex-col overflow-hidden blur-[0.3px] [font-family:'Liberation_Sans','Noto_Sans_CJK_SC',sans-serif]">
      <MenuBar />
      <BrowserChrome />
      <Main />
      <Dock />
    </div>
  );
}
